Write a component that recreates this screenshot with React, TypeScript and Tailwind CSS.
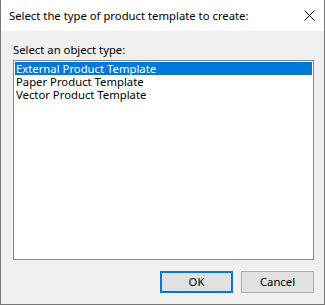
export default function App() {
  const items = ["External Product Template", "Paper Product Template", "Vector Product Template"];
  return (
    <div
      className="w-[325px] h-[305px] flex flex-col border-x border-b border-[#777777] bg-[#f0f0f0] text-[11.3px] text-black"
      style={{ fontFamily: '"Segoe UI", "Noto Sans", sans-serif' }}
    >
      {/* title bar */}
      <div className="h-[31px] bg-white flex items-center justify-between pl-[8px] pr-[9px]">
        <span className="leading-[15px]">Select the type of product template to create:</span>
        <svg width="11" height="11" viewBox="0 0 11 11" aria-hidden="true">
          <path d="M0.5 0.5 L10.5 10.5 M10.5 0.5 L0.5 10.5" stroke="#000" strokeWidth="1" />
        </svg>
      </div>

      {/* client area */}
      <div className="flex-1 flex flex-col pl-[12px] pt-[11px]">
        <span className="leading-[15px]">Select an object type:</span>
        <div className="mt-[3px] w-[301px] h-[200px] bg-white border border-[#828790] p-[1px] flex flex-col">
          {items.map((item, i) => (
            <div
              key={item}
              className={
                "h-[13px] leading-[13px] pl-[1px] " + (i === 0 ? "bg-[#0078d7] text-white" : "")
              }
            >
              {item}
            </div>
          ))}
        </div>
        <div className="mt-[11px] w-[301px] flex justify-end gap-[8px]">
          <button className="w-[73px] h-[22px] bg-[#e1e1e1] border-2 border-[#0078d7] leading-none">OK</button>
          <button className="w-[73px] h-[22px] bg-[#e1e1e1] border border-[#adadad] leading-none">Cancel</button>
        </div>
      </div>
    </div>
  );
}
